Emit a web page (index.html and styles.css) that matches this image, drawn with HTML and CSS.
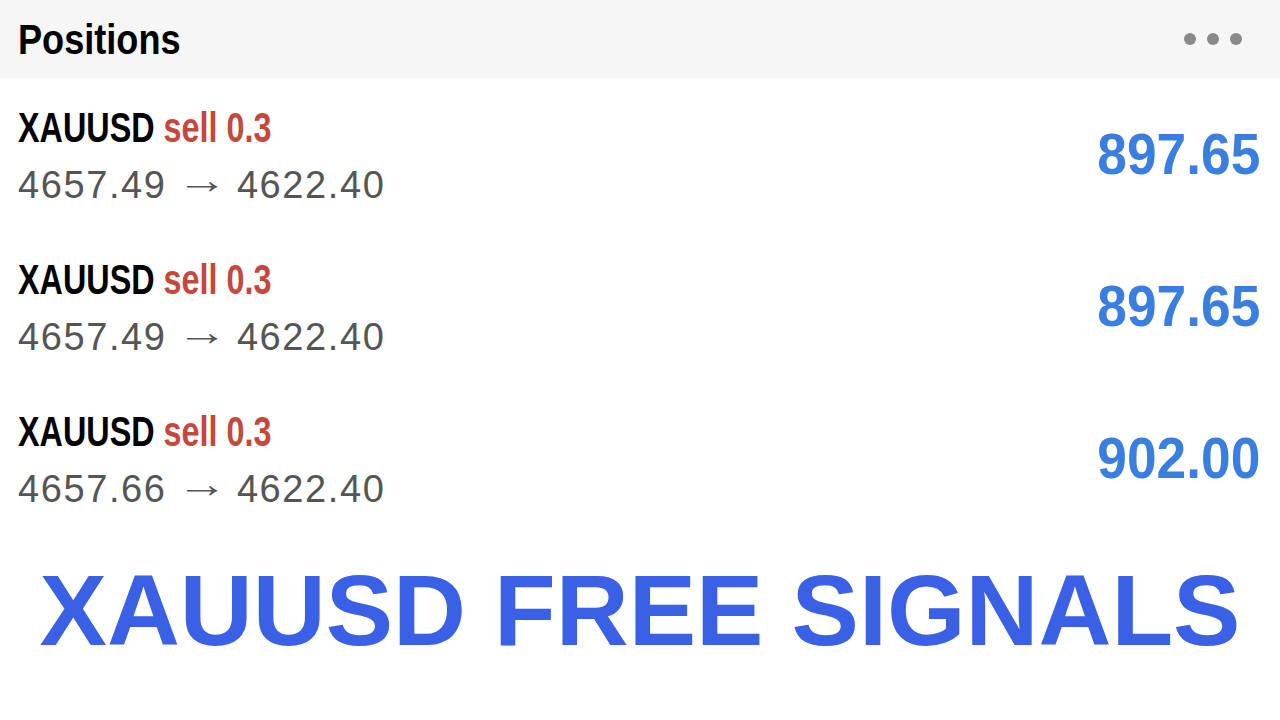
FILE: index.html
```html
<!DOCTYPE html>
<html lang="en">
  <head>
    <meta charset="utf-8">
    <title>Positions</title>
    <link rel="stylesheet" href="styles.css">
  </head>
  <body>
    <header class="bar">
      <h1><span class="narrow">Positions</span></h1>
      <div class="more"><span></span><span></span><span></span></div>
    </header>
    <ul class="positions">
      <li class="position">
        <div class="info">
          <div class="title"><span class="narrow">XAUUSD <span class="side">sell 0.3</span></span></div>
          <div class="prices">4657.49 <span class="arrow">&rarr;</span> 4622.40</div>
        </div>
        <div class="profit"><span class="narrow">897.65</span></div>
      </li>
      <li class="position">
        <div class="info">
          <div class="title"><span class="narrow">XAUUSD <span class="side">sell 0.3</span></span></div>
          <div class="prices">4657.49 <span class="arrow">&rarr;</span> 4622.40</div>
        </div>
        <div class="profit"><span class="narrow">897.65</span></div>
      </li>
      <li class="position">
        <div class="info">
          <div class="title"><span class="narrow">XAUUSD <span class="side">sell 0.3</span></span></div>
          <div class="prices">4657.66 <span class="arrow">&rarr;</span> 4622.40</div>
        </div>
        <div class="profit"><span class="narrow">902.00</span></div>
      </li>
    </ul>
    <p class="banner">XAUUSD FREE SIGNALS</p>
  </body>
</html>
```

FILE: styles.css
```css
body {
  margin: 0;
  background: #fff;
  font-family: "Liberation Sans", Arial, sans-serif;
}
.narrow {
  display: inline-block;
  white-space: nowrap;
  transform-origin: left center;
}
.bar {
  display: flex;
  align-items: center;
  justify-content: space-between;
  height: 78px;
  padding: 0 38px 0 18px;
  background: #f6f6f6;
}
.bar h1 {
  margin: 2px 0 0;
  font-size: 42px;
  font-weight: bold;
  color: #000;
  line-height: 1;
}
.bar h1 .narrow {
  transform: scaleX(0.86);
}
.more {
  display: flex;
  gap: 11px;
}
.more span {
  width: 12px;
  height: 12px;
  border-radius: 50%;
  background: #8a8a8a;
}
.positions {
  list-style: none;
  margin: 0;
  padding: 0;
}
.position {
  display: flex;
  align-items: center;
  justify-content: space-between;
  height: 152px;
  padding: 0 20px 0 18px;
}
.title {
  font-size: 42px;
  line-height: 48px;
  font-weight: bold;
  color: #000;
  margin-top: 2px;
}
.title .narrow {
  transform: scaleX(0.77);
}
.side {
  color: #c4483c;
}
.prices {
  margin-top: 11px;
  font-size: 38px;
  line-height: 44px;
  letter-spacing: 1.6px;
  color: #555;
}
.arrow {
  display: inline-block;
  letter-spacing: 0;
  margin: 0 4px;
  transform: scaleX(1.35) translateY(-5px);
}
.profit {
  font-size: 57px;
  font-weight: bold;
  color: #3a7ee0;
}
.profit .narrow {
  transform-origin: right center;
  transform: scaleX(0.935);
}
.banner {
  margin: 26px 0 0;
  text-align: center;
  font-size: 101px;
  font-weight: bold;
  line-height: 1;
  color: #3a60e6;
}
```
